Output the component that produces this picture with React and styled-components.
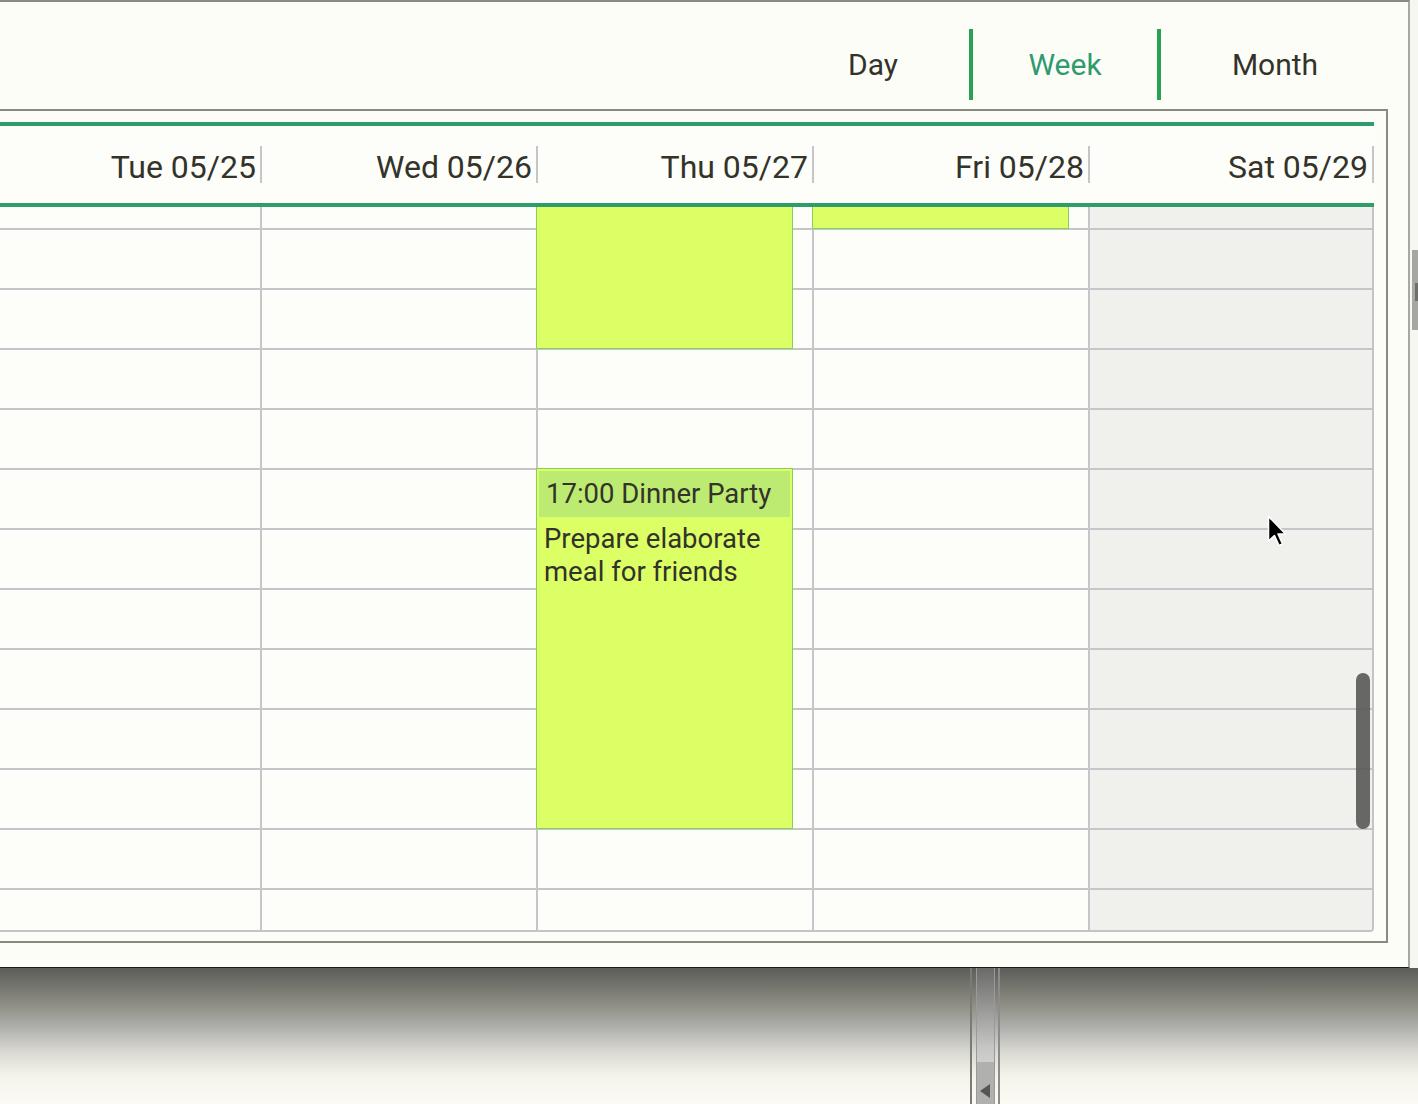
import styled, { createGlobalStyle } from "styled-components";
import { useLayoutEffect, useRef } from "react";

const GlobalStyle = createGlobalStyle`
  html, body {
    margin: 0;
    padding: 0;
  }
  body {
    background: #fbfbf5;
    font-family: Roboto, "Liberation Sans", sans-serif;
    color: #33332a;
    overflow: hidden;
  }
`;

const HOUR = 60;
const SCROLL_TOP = 759;

const days = [
  { label: "Tue 05/25" },
  { label: "Wed 05/26" },
  { label: "Thu 05/27" },
  { label: "Fri 05/28" },
  { label: "Sat 05/29", weekend: true },
];

// earlier events are scrolled above the visible area, only their tails show
const events = [
  { id: 1, day: 2, start: 10, end: 15 },
  { id: 2, day: 3, start: 11, end: 13 },
  {
    id: 3,
    day: 2,
    start: 17,
    end: 23,
    title: "17:00 Dinner Party",
    text: "Prepare elaborate meal for friends",
  },
];

const Screen = styled.div`
  width: 1418px;
  height: 1104px;
  display: flex;
  flex-direction: column;
  position: relative;
  overflow: hidden;
`;

const TopArea = styled.div`
  display: flex;
  height: 968px;
`;

const Window = styled.div`
  width: 1410px;
  height: 968px;
  box-sizing: border-box;
  border-top: 2px solid #8a8a84;
  border-right: 2px solid #a8a8a2;
  border-bottom: 1px solid #1a1a1a;
  background: #fdfdf8;
  display: flex;
  flex-direction: column;
`;

const Gutter = styled.div`
  flex: 1;
  background: #f7f7f1;
  display: flex;
  justify-content: flex-end;
`;

const PageThumb = styled.div`
  width: 6px;
  height: 80px;
  margin-top: 250px;
  background: #a6a6a2;
  display: flex;
  justify-content: flex-end;

  &::after {
    content: "";
    width: 3px;
    height: 18px;
    margin-top: 33px;
    background: #6e6e6a;
  }
`;

const Toolbar = styled.div`
  height: 107px;
  box-sizing: border-box;
  padding: 27px 19px 0 0;
  display: flex;
  justify-content: flex-end;
  align-items: flex-start;
`;

const ViewButton = styled.button`
  width: ${(p) => p.$width}px;
  height: 71px;
  border: none;
  background: transparent;
  padding: 0;
  font-family: Roboto, "Liberation Sans", sans-serif;
  font-size: 30px;
  line-height: 71px;
  color: ${(p) => (p.$active ? "#2f9a6e" : "#33332a")};
  text-align: center;
  cursor: pointer;
`;

const ToolbarDivider = styled.span`
  width: 4px;
  height: 71px;
  background: #25a253;
`;

const Panel = styled.div`
  width: 1388px;
  height: 834px;
  box-sizing: border-box;
  border-top: 2px solid #8a8a84;
  border-right: 2px solid #8a8a84;
  border-bottom: 2px solid #8a8a84;
  padding: 11px 12px 9px 0;
`;

const Calendar = styled.div`
  width: 1374px;
  display: flex;
  flex-direction: column;
`;

const Header = styled.div`
  display: grid;
  grid-template-columns: 262px 276px 276px 276px 284px;
  height: 77px;
  border-top: 4px solid #2f9c6c;
  border-bottom: 4px solid #2f9c6c;
  background: #fdfdf9;
`;

const HeaderCell = styled.div`
  position: relative;
  display: flex;
  align-items: center;
  justify-content: flex-end;
  padding: 4px 6px 0 0;
  font-size: 32px;
  color: #33332a;

  &::after {
    content: "";
    position: absolute;
    right: 0;
    top: 20px;
    width: 2px;
    height: 37px;
    background: #c6c6c8;
  }
`;

const BodyWrap = styled.div`
  position: relative;
`;

const Body = styled.div`
  height: 725px;
  box-sizing: border-box;
  overflow: hidden;
  border-right: 2px solid #c4c4c8;
  border-bottom: 2px solid #c4c4c8;
  border-bottom-right-radius: 4px;
`;

const Columns = styled.div`
  display: grid;
  grid-template-columns: 262px 276px 276px 276px 282px;
  height: ${25 * HOUR}px;
`;

const DayColumn = styled.div`
  position: relative;
  display: flex;
  flex-direction: column;
  box-sizing: border-box;
  border-right: ${(p) => (p.$last ? "none" : "2px solid #c6c6ca")};
  background: ${(p) => (p.$weekend ? "#f0f0ec" : "#fdfdf9")};
`;

const Slot = styled.div`
  height: ${HOUR}px;
  flex: none;
  box-sizing: border-box;
  border-top: ${(p) => (p.$first ? "none" : "2px solid #c6c6ca")};
`;

const Event = styled.div`
  position: absolute;
  left: -2px;
  width: 257px;
  box-sizing: border-box;
  background: #dcff66;
  border: 1px solid #84cf5e;
  z-index: 1;
  overflow: hidden;
`;

const EventTitle = styled.div`
  margin: 2px 2px 0;
  height: 46px;
  padding-left: 7px;
  background: #bdeb72;
  font-size: 27.5px;
  line-height: 46px;
  color: #33332a;
  white-space: nowrap;
`;

const EventText = styled.div`
  padding: 5px 8px 0 7px;
  font-size: 27.5px;
  line-height: 33px;
  color: #33332a;
`;

const ScrollThumb = styled.div`
  position: absolute;
  top: 466px;
  right: 4px;
  width: 14px;
  height: 156px;
  border-radius: 7px;
  background: rgba(88, 88, 86, 0.9);
  z-index: 2;
`;

const BottomArea = styled.div`
  flex: 1;
  display: flex;
  background: linear-gradient(
    to bottom,
    #5c5c5a 0%,
    #8a8a80 25%,
    #b2b2b0 45%,
    #dadad2 62%,
    #f4f4ea 80%,
    #fbfbf5 100%
  );
`;

const Spacer = styled.div`
  width: 970px;
`;

const Strip = styled.div`
  width: 30px;
  box-sizing: border-box;
  border-left: 2px solid #7a7a78;
  border-right: 2px solid #8c8c8a;
  display: flex;
  justify-content: center;
`;

const StripTrack = styled.div`
  width: 17px;
  display: flex;
  flex-direction: column;
  border-left: 1px solid #9a9a98;
  border-right: 1px solid #9a9a98;
  background: linear-gradient(to bottom, #6a6a68, #c8c8c6 60%, #e6e6e2);
`;

const StripGrow = styled.div`
  flex: 1;
`;

const StripButton = styled.div`
  height: 42px;
  background: #b0b0ae;
  display: flex;
  align-items: flex-end;
  justify-content: center;
  padding-bottom: 6px;
  box-sizing: border-box;
`;

const Cursor = styled.svg`
  position: absolute;
  left: 1267px;
  top: 515px;
  z-index: 5;
`;

function EventBlock({ ev }) {
  const top = ev.start * HOUR;
  const height = (ev.end - ev.start) * HOUR + 1;
  return (
    <Event style={{ top, height }}>
      {ev.title && <EventTitle>{ev.title}</EventTitle>}
      {ev.text && <EventText>{ev.text}</EventText>}
    </Event>
  );
}

export default function App() {
  const bodyRef = useRef(null);

  useLayoutEffect(() => {
    if (bodyRef.current) bodyRef.current.scrollTop = SCROLL_TOP;
  }, []);

  return (
    <Screen>
      <GlobalStyle />
      <TopArea>
        <Window>
          <Toolbar>
            <ViewButton $width={192}>Day</ViewButton>
            <ToolbarDivider />
            <ViewButton $width={184} $active>
              Week
            </ViewButton>
            <ToolbarDivider />
            <ViewButton $width={228}>Month</ViewButton>
          </Toolbar>
          <Panel>
            <Calendar>
              <Header>
                {days.map((d) => (
                  <HeaderCell key={d.label}>{d.label}</HeaderCell>
                ))}
              </Header>
              <BodyWrap>
                <Body ref={bodyRef}>
                  <Columns>
                    {days.map((d, i) => (
                      <DayColumn
                        key={d.label}
                        $weekend={d.weekend}
                        $last={i === days.length - 1}
                      >
                        {Array.from({ length: 25 }).map((_, h) => (
                          <Slot key={h} $first={h === 0} />
                        ))}
                        {events
                          .filter((ev) => ev.day === i)
                          .map((ev) => (
                            <EventBlock key={ev.id} ev={ev} />
                          ))}
                      </DayColumn>
                    ))}
                  </Columns>
                </Body>
                <ScrollThumb />
              </BodyWrap>
            </Calendar>
          </Panel>
        </Window>
        <Gutter>
          <PageThumb />
        </Gutter>
      </TopArea>
      <BottomArea>
        <Spacer />
        <Strip>
          <StripTrack>
            <StripGrow />
            <StripButton>
              <svg width="11" height="14" viewBox="0 0 11 14">
                <path d="M10 0 L0 7 L10 14 Z" fill="#555553" />
              </svg>
            </StripButton>
          </StripTrack>
        </Strip>
      </BottomArea>
      <Cursor width="20" height="33" viewBox="0 0 20 33">
        <path
          d="M1.5 1.5 L1.5 26 L7.5 20.5 L12 30.5 L15.5 29 L11 19 L18.5 19 Z"
          fill="#000"
          stroke="#fff"
          strokeWidth="1.5"
          strokeLinejoin="round"
        />
      </Cursor>
    </Screen>
  );
}
